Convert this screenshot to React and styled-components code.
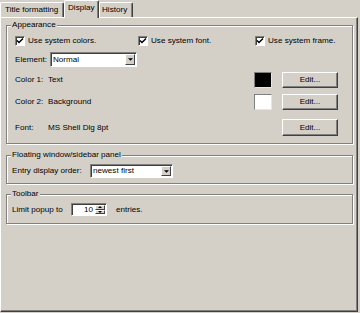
import styled, { createGlobalStyle } from 'styled-components'

const GlobalStyle = createGlobalStyle`
    html, body {
        margin: 0;
        padding: 0;
        background: #d4d0c8;
    }

    body {
        font-family: "Liberation Sans", Arial, sans-serif;
        font-size: 8.1px;
        line-height: 10px;
        color: #000;
    }
`

const Window = styled.div`
    width: 360px;
    height: 313px;
    overflow: hidden;
    background: #d4d0c8;
`

const TabBar = styled.div`
    display: flex;
    align-items: flex-end;
    height: 17px;
    position: relative;
    z-index: 1;
`

const Tab = styled.div`
    box-sizing: border-box;
    width: ${p => p.$w}px;
    height: ${p => (p.$active ? 18 : 15)}px;
    margin-bottom: ${p => (p.$active ? -1 : 0)}px;
    padding: 2px 0 0 ${p => p.$pad}px;
    background: #d4d0c8;
    border-top: 1px solid #fff;
    border-left: 1px solid #fff;
    border-right: 1px solid #404040;
    box-shadow: inset -1px 0 0 #808080;
    border-top-left-radius: 2px;
    border-top-right-radius: 2px;
    white-space: nowrap;
`

const Panel = styled.div`
    box-sizing: border-box;
    width: 358px;
    height: 295px;
    border-top: 1px solid #fff;
    border-left: 1px solid #fff;
    border-right: 1px solid #404040;
    border-bottom: 1px solid #404040;
    box-shadow: inset -1px -1px 0 #808080;
    display: flex;
    flex-direction: column;
    padding: 7px 4px 0 5px;
`

const Group = styled.div`
    position: relative;
    box-sizing: border-box;
    height: ${p => p.$h}px;
    margin-top: ${p => p.$mt || 0}px;
    border: 1px solid #808080;
    box-shadow: inset 1px 1px 0 #fff, 1px 1px 0 #fff;
    padding: ${p => p.$pad};
    display: flex;
    flex-direction: column;
`

const Caption = styled.span`
    position: absolute;
    top: -6px;
    left: 4px;
    padding: 0 1px;
    background: #d4d0c8;
    white-space: nowrap;
`

const CheckRow = styled.div`
    display: grid;
    grid-template-columns: 123px 117px 1fr;
    align-items: center;
    height: 12px;
    margin-top: 9px;
`

const CheckLabel = styled.label`
    display: flex;
    align-items: center;
    gap: 3px;
    white-space: nowrap;
`

const CheckBox = styled.span`
    box-sizing: border-box;
    width: 10px;
    height: 10px;
    background: #fff;
    border-top: 1px solid #808080;
    border-left: 1px solid #808080;
    border-right: 1px solid #fff;
    border-bottom: 1px solid #fff;
    box-shadow: inset 1px 1px 0 #404040;
    display: flex;
    align-items: center;
    justify-content: center;
`

const Row = styled.div`
    display: flex;
    align-items: center;
    height: ${p => p.$h}px;
    margin-top: ${p => p.$mt || 0}px;
`

const FieldLabel = styled.span`
    width: ${p => p.$w}px;
    flex: none;
    white-space: nowrap;
`

const Combo = styled.div`
    box-sizing: border-box;
    width: ${p => p.$w}px;
    height: ${p => p.$h}px;
    background: #fff;
    border-top: 1px solid #808080;
    border-left: 1px solid #808080;
    border-right: 1px solid #fff;
    border-bottom: 1px solid #fff;
    box-shadow: inset 1px 1px 0 #404040;
    display: flex;
    align-items: center;
    padding: 1px 1px 1px 2px;
`

const ComboText = styled.span`
    flex: 1;
    white-space: nowrap;
`

const ArrowButton = styled.span`
    box-sizing: border-box;
    width: 10px;
    align-self: stretch;
    background: #d4d0c8;
    border-top: 1px solid #fff;
    border-left: 1px solid #fff;
    border-right: 1px solid #404040;
    border-bottom: 1px solid #404040;
    display: flex;
    align-items: center;
    justify-content: center;
`

const ColorRow = styled.div`
    display: grid;
    grid-template-columns: 33px 1fr 18px 66px;
    align-items: center;
    height: ${p => p.$h}px;
    margin-top: ${p => p.$mt}px;
`

const Swatch = styled.span`
    box-sizing: border-box;
    width: 18px;
    height: 16px;
    background: ${p => p.$color};
    border-top: 1px solid #808080;
    border-left: 1px solid #808080;
    border-right: 1px solid #e8e6e0;
    border-bottom: 1px solid #e8e6e0;
`

const Button = styled.button`
    grid-column: 4;
    justify-self: end;
    box-sizing: border-box;
    width: 56px;
    height: ${p => p.$h || 16}px;
    padding: 0;
    font: inherit;
    color: #000;
    background: #d4d0c8;
    border-top: 1px solid #fff;
    border-left: 1px solid #fff;
    border-right: 1px solid #404040;
    border-bottom: 1px solid #404040;
    box-shadow: inset -1px -1px 0 #808080;
`

const Spin = styled.div`
    box-sizing: border-box;
    width: 36px;
    height: 13px;
    background: #fff;
    border-top: 1px solid #808080;
    border-left: 1px solid #808080;
    border-right: 1px solid #fff;
    border-bottom: 1px solid #fff;
    box-shadow: inset 1px 1px 0 #404040;
    display: flex;
    padding: 1px 1px 1px 0;
`

const SpinValue = styled.span`
    flex: 1;
    text-align: right;
    padding-right: 2px;
    line-height: 10px;
`

const SpinButtons = styled.span`
    width: 10px;
    display: flex;
    flex-direction: column;
`

const SpinHalf = styled.span`
    flex: 1;
    box-sizing: border-box;
    background: #d4d0c8;
    border-top: 1px solid #fff;
    border-left: 1px solid #fff;
    border-right: 1px solid #404040;
    border-bottom: 1px solid #404040;
    display: flex;
    align-items: center;
    justify-content: center;
`

const Trailing = styled.span`
    margin-left: 9px;
`

const Check = () => (
    <svg width="8" height="8" viewBox="0 0 8 8">
        <path d="M1 3.5 L3 5.5 L7 1.5" fill="none" stroke="#000" strokeWidth="1.5" />
    </svg>
)

const Arrow = ({ up, size = 5 }) => (
    <svg width={size} height={Math.ceil(size / 2)} viewBox="0 0 6 3">
        <path d={up ? 'M0 3 L3 0 L6 3 Z' : 'M0 0 L6 0 L3 3 Z'} fill="#000" />
    </svg>
)

const CheckItem = ({ children }) => (
    <CheckLabel>
        <CheckBox><Check /></CheckBox>
        {children}
    </CheckLabel>
)

const ComboBox = ({ value, w, h }) => (
    <Combo $w={w} $h={h}>
        <ComboText>{value}</ComboText>
        <ArrowButton><Arrow /></ArrowButton>
    </Combo>
)

const App = () => {
    return (
        <Window>
            <GlobalStyle />
            <TabBar>
                <Tab $w={64} $pad={4}>Title formatting</Tab>
                <Tab $w={35} $pad={3} $active>Display</Tab>
                <Tab $w={34} $pad={2}>History</Tab>
            </TabBar>
            <Panel>
                <Group $h={119} $pad="0 14px 0 8px">
                    <Caption>Appearance</Caption>
                    <CheckRow>
                        <CheckItem>Use system colors.</CheckItem>
                        <CheckItem>Use system font.</CheckItem>
                        <CheckItem>Use system frame.</CheckItem>
                    </CheckRow>
                    <Row $h={15} $mt={5}>
                        <FieldLabel $w={35}>Element:</FieldLabel>
                        <ComboBox value="Normal" w={87} h={15} />
                    </Row>
                    <ColorRow $h={16} $mt={5}>
                        <span>Color 1:</span>
                        <span>Text</span>
                        <Swatch $color="#000" />
                        <Button>Edit...</Button>
                    </ColorRow>
                    <ColorRow $h={16} $mt={6}>
                        <span>Color 2:</span>
                        <span>Background</span>
                        <Swatch $color="#fff" />
                        <Button>Edit...</Button>
                    </ColorRow>
                    <ColorRow $h={17} $mt={9}>
                        <span>Font:</span>
                        <span>MS Shell Dlg 8pt</span>
                        <span />
                        <Button $h={17}>Edit...</Button>
                    </ColorRow>
                </Group>
                <Group $h={29} $mt={11} $pad="8px 0 0 5px">
                    <Caption>Floating window/sidebar panel</Caption>
                    <Row $h={14}>
                        <FieldLabel $w={78}>Entry display order:</FieldLabel>
                        <ComboBox value="newest first" w={83} h={14} />
                    </Row>
                </Group>
                <Group $h={30} $mt={10} $pad="8px 0 0 5px">
                    <Caption>Toolbar</Caption>
                    <Row $h={13}>
                        <FieldLabel $w={59}>Limit popup to</FieldLabel>
                        <Spin>
                            <SpinValue>10</SpinValue>
                            <SpinButtons>
                                <SpinHalf><Arrow up size={4} /></SpinHalf>
                                <SpinHalf><Arrow size={4} /></SpinHalf>
                            </SpinButtons>
                        </Spin>
                        <Trailing>entries.</Trailing>
                    </Row>
                </Group>
            </Panel>
        </Window>
    )
}

export default App
